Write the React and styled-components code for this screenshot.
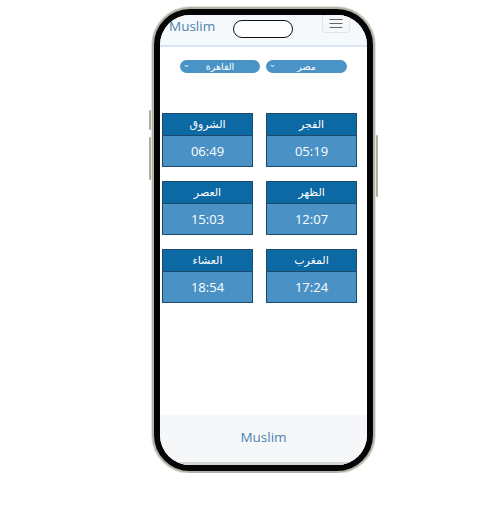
import React from "react";
import styled, { createGlobalStyle } from "styled-components";

const GlobalStyle = createGlobalStyle`
  body {
    margin: 0;
    background: #ffffff;
    font-family: "Open Sans", "DejaVu Sans", sans-serif;
  }
`;

const Stage = styled.div`
  padding: 7px 0 0 152px;
`;

const Phone = styled.div`
  position: relative;
  box-sizing: border-box;
  width: 223px;
  height: 466px;
  padding: 6px;
  border: 2px solid #b4b3a9;
  border-radius: 38px;
  background: #050505;
  box-shadow: 0 0 0 1px #e4e4de;
`;

const SideButton = styled.span`
  position: absolute;
  width: 2px;
  border-radius: 1px;
  background: #aeada4;
  top: ${(p) => p.top}px;
  height: ${(p) => p.height}px;
  ${(p) => (p.right ? "right: -5px;" : "left: -5px;")}
`;

const Screen = styled.div`
  position: relative;
  display: flex;
  flex-direction: column;
  height: 100%;
  border-radius: 30px;
  overflow: hidden;
  background: #ffffff;
`;

const Island = styled.div`
  position: absolute;
  left: 73px;
  top: 5px;
  box-sizing: border-box;
  width: 60px;
  height: 18px;
  border: 1.5px solid #111;
  border-radius: 9px;
  background: #ffffff;
`;

const Header = styled.header`
  box-sizing: border-box;
  height: 32px;
  display: flex;
  justify-content: space-between;
  align-items: flex-start;
  padding: 0 17px 0 9px;
  background: #f6f9fb;
  border-bottom: 2px solid #d9e6f1;
`;

const Brand = styled.span`
  padding-top: 3px;
  font-size: 13.5px;
  line-height: 16px;
  color: #4d83b0;
`;

const MenuButton = styled.button`
  box-sizing: border-box;
  width: 28px;
  height: 19px;
  margin-top: -1px;
  padding: 0;
  display: flex;
  align-items: center;
  justify-content: center;
  border: 1px solid #e0e2e4;
  border-radius: 4px;
  background: #f7f8f9;
`;

const Main = styled.main`
  flex: 1;
  display: flex;
  flex-direction: column;
  padding-top: 13px;
`;

const Selects = styled.div`
  direction: rtl;
  display: flex;
  justify-content: center;
  gap: 6px;
`;

const SelectWrap = styled.div`
  position: relative;
  width: ${(p) => p.width}px;
  height: 13px;
`;

const Select = styled.select`
  appearance: none;
  display: block;
  width: 100%;
  height: 13px;
  margin: 0;
  padding: 0;
  border: none;
  border-radius: 7px;
  background: #4a93c6;
  color: #ffffff;
  font-family: "DejaVu Sans", sans-serif;
  font-size: 9.5px;
  line-height: 13px;
  text-align: center;
  text-align-last: center;
  outline: none;
`;

const Chevron = styled.svg`
  position: absolute;
  left: 4px;
  top: 4px;
  pointer-events: none;
`;

const Grid = styled.div`
  direction: rtl;
  display: grid;
  grid-template-columns: 91px 91px;
  column-gap: 13px;
  row-gap: 14px;
  justify-content: center;
  margin-top: 40px;
  padding: 0 10px 0 2px;
`;

const Card = styled.div`
  box-sizing: border-box;
  height: 54px;
  display: flex;
  flex-direction: column;
  border: 1px solid #1c4968;
`;

const CardTitle = styled.div`
  height: 21px;
  display: flex;
  align-items: center;
  justify-content: center;
  background: #0d69a3;
  border-bottom: 1px solid #1c4968;
  color: #ffffff;
  font-family: "DejaVu Serif", "DejaVu Sans", serif;
  font-size: 11px;
`;

const CardValue = styled.div`
  flex: 1;
  display: flex;
  align-items: center;
  justify-content: center;
  background: #4a92c6;
  color: #ffffff;
  font-size: 13px;
`;

const Footer = styled.footer`
  box-sizing: border-box;
  height: 50px;
  display: flex;
  align-items: center;
  justify-content: center;
  padding-bottom: 3px;
  background: #f5f7f9;
  border-bottom: 3px solid #d3d4d4;
  color: #4d83b0;
  font-size: 13.5px;
`;

const PRAYERS = [
  { name: "الفجر", time: "05:19" },
  { name: "الشروق", time: "06:49" },
  { name: "الظهر", time: "12:07" },
  { name: "العصر", time: "15:03" },
  { name: "المغرب", time: "17:24" },
  { name: "العشاء", time: "18:54" },
];

const ChevronIcon = () => (
  <Chevron width="5" height="4" viewBox="0 0 5 4">
    <path d="M0.8 1 L2.5 2.8 L4.2 1" fill="none" stroke="#fff" strokeWidth="1" />
  </Chevron>
);

const App = () => {
  return (
    <>
      <GlobalStyle />
      <Stage>
        <Phone>
          <SideButton top={101} height={20} />
          <SideButton top={128} height={43} />
          <SideButton right top={126} height={62} />
          <Screen>
            <Header>
              <Brand>Muslim</Brand>
              <MenuButton aria-label="menu">
                <svg width="14" height="11" viewBox="0 0 14 11">
                  <path d="M0.5 1.5H13.5M0.5 5.5H13.5M0.5 9.5H13.5" stroke="#666" strokeWidth="1.2" />
                </svg>
              </MenuButton>
            </Header>
            <Island />
            <Main>
              <Selects>
                <SelectWrap width={81}>
                  <Select defaultValue="eg">
                    <option value="eg">مصر</option>
                  </Select>
                  <ChevronIcon />
                </SelectWrap>
                <SelectWrap width={80}>
                  <Select defaultValue="cairo">
                    <option value="cairo">القاهرة</option>
                  </Select>
                  <ChevronIcon />
                </SelectWrap>
              </Selects>
              <Grid>
                {PRAYERS.map((p) => (
                  <Card key={p.name}>
                    <CardTitle>{p.name}</CardTitle>
                    <CardValue>{p.time}</CardValue>
                  </Card>
                ))}
              </Grid>
            </Main>
            <Footer>Muslim</Footer>
          </Screen>
        </Phone>
      </Stage>
    </>
  );
};

export default App;
